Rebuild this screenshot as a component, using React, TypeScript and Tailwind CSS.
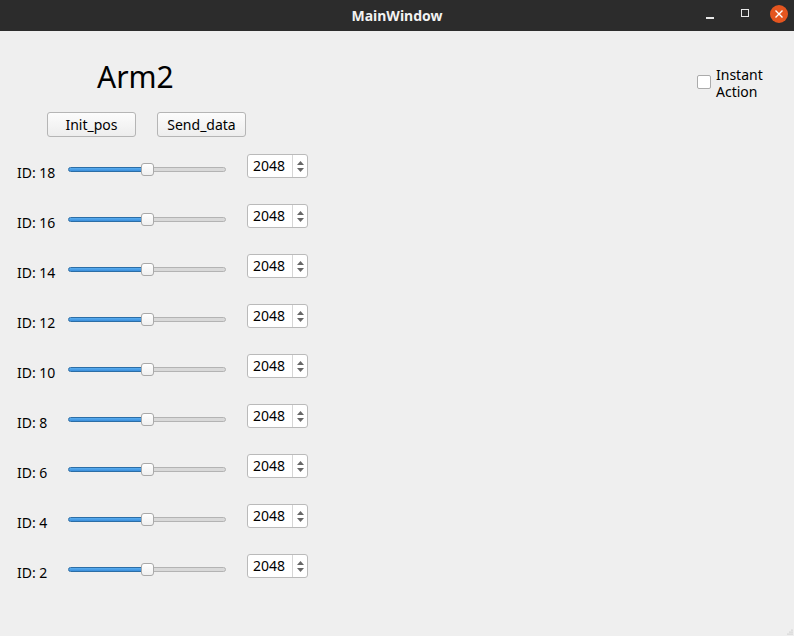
import React from "react";

const ids = [18, 16, 14, 12, 10, 8, 6, 4, 2];

function Slider() {
  return (
    <div className="relative mt-[9px] flex h-[13px] w-[158px] items-center">
      <div className="flex h-[5px] w-full">
        <div className="h-full w-[76px] rounded-l-[3px] border border-[#2c6ea6] bg-gradient-to-b from-[#5aaef0] to-[#3a8edb]" />
        <div className="h-full flex-1 rounded-r-[3px] border border-[#b3b3b3] bg-[#d9d9d9]" />
      </div>
      <div className="absolute left-[73px] top-0 h-[13px] w-[13px] rounded-[3px] border border-[#a9a9a9] bg-gradient-to-b from-white to-[#f0f0f0]" />
    </div>
  );
}

function SpinBox() {
  return (
    <div className="ml-[21px] flex h-[24px] w-[61px] rounded-[3px] border border-[#bababa] bg-white">
      <div className="flex flex-1 items-center pl-[5px] text-[14px] leading-[18px] text-black">2048</div>
      <div className="flex w-[15px] flex-col items-center justify-center gap-[3px] border-l border-[#d6d6d6]">
        <svg width="7" height="4" viewBox="0 0 7 4">
          <path d="M0 4 L3.5 0 L7 4 Z" fill="#666666" />
        </svg>
        <svg width="7" height="4" viewBox="0 0 7 4">
          <path d="M0 0 L3.5 4 L7 0 Z" fill="#666666" />
        </svg>
      </div>
    </div>
  );
}

function Button({ label }: { label: string }) {
  return (
    <div className="flex h-[25px] w-[89px] items-center justify-center rounded-[3px] border border-[#b5b5b5] bg-gradient-to-b from-[#fcfcfc] to-[#ededed] text-[14px] leading-[18px] text-black">
      {label}
    </div>
  );
}

export default function App() {
  return (
    <div
      className="relative flex h-[636px] w-[794px] flex-col overflow-hidden bg-[#efefef]"
      style={{ fontFamily: '"Noto Sans", "Open Sans", sans-serif' }}
    >
      {/* Title bar */}
      <div className="relative flex h-[31px] items-center justify-center bg-[#2c2c2c]">
        <span className="text-[14px] font-bold leading-[18px] text-[#f2f2f2]">MainWindow</span>
        <div className="absolute right-[6px] top-0 flex h-[31px] items-center">
          <div className="mt-[4px] h-[2px] w-[8px] bg-[#e8e8e8]" />
          <div className="ml-[27px] mb-[5px] h-[8px] w-[8px] border-[1.5px] border-[#e8e8e8]" />
          <div className="ml-[21px] mb-[4px] flex h-[18px] w-[18px] items-center justify-center rounded-full bg-[#e4551f]">
            <svg width="8" height="8" viewBox="0 0 8 8">
              <path d="M0.5 0.5 L7.5 7.5 M7.5 0.5 L0.5 7.5" stroke="#ffffff" strokeWidth="1.4" />
            </svg>
          </div>
        </div>
      </div>

      {/* Content */}
      <div className="flex flex-1 flex-col text-black">
        <div className="flex">
          <div className="flex w-[697px] flex-col">
            <div className="mt-[28px] pl-[97px] text-[30px] leading-[36px]">Arm2</div>
            <div className="mt-[17px] flex gap-[21px] pl-[47px]">
              <Button label="Init_pos" />
              <Button label="Send_data" />
            </div>
          </div>
          <div className="mt-[35px] flex items-start gap-[5px] self-start">
            <div className="mt-[9px] h-[14px] w-[14px] rounded-[2px] border border-[#ababab] bg-white" />
            <div className="text-[14px] leading-[17px]">
              Instant
              <br />
              Action
            </div>
          </div>
        </div>

        <div className="mt-[17px] flex flex-col">
          {ids.map((id) => (
            <div key={id} className="flex h-[50px] items-start">
              <div className="mt-[10px] w-[68px] pl-[17px] text-[14px] leading-[18px]">ID: {id}</div>
              <Slider />
              <SpinBox />
            </div>
          ))}
        </div>
      </div>

      {/* size grip */}
      <svg className="absolute bottom-[1px] right-[1px]" width="8" height="8" viewBox="0 0 8 8">
        <circle cx="7" cy="3" r="0.6" fill="#b0b0b0" />
        <circle cx="5" cy="5" r="0.6" fill="#b0b0b0" />
        <circle cx="7" cy="5" r="0.6" fill="#b0b0b0" />
        <circle cx="3" cy="7" r="0.6" fill="#b0b0b0" />
        <circle cx="5" cy="7" r="0.6" fill="#b0b0b0" />
        <circle cx="7" cy="7" r="0.6" fill="#b0b0b0" />
      </svg>
    </div>
  );
}
